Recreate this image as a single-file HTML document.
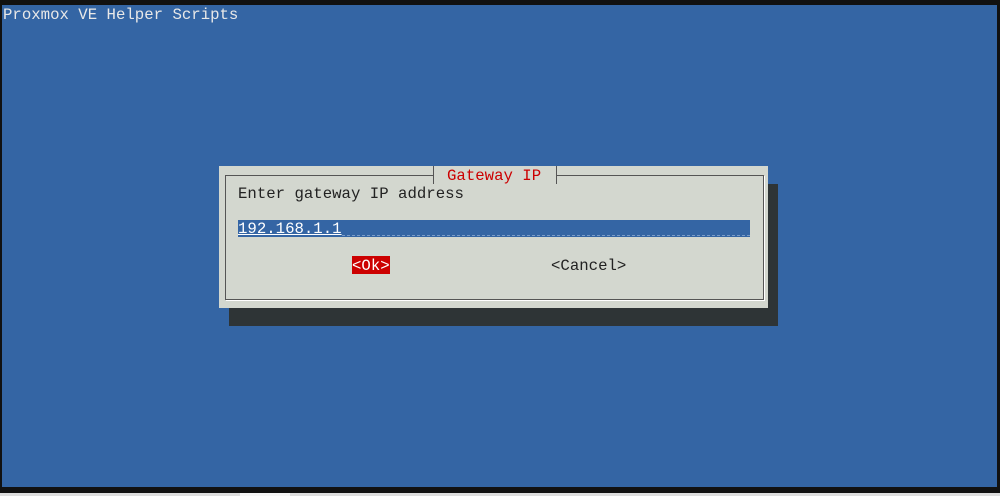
<!DOCTYPE html>
<html><head><style>
*{margin:0;padding:0}
body{width:1000px;height:496px;background:#111;position:relative;overflow:hidden;font-family:"Liberation Mono",monospace;font-size:15.7px}
.t{position:absolute;white-space:pre;line-height:18px}
</style></head><body>
<div style="position:absolute;left:0;top:493px;width:1000px;height:3px;background:#ddd"></div>
<div style="position:absolute;left:240px;top:493px;width:50px;height:3px;background:#f6f6f6"></div>
<div style="position:absolute;left:2px;top:5px;width:995px;height:482px;background:#3465a4"></div>
<div class="t" style="left:3px;top:6px;color:#e8e8e8">Proxmox VE Helper Scripts</div>
<div style="position:absolute;left:229px;top:184px;width:549px;height:142px;background:#2e3436"></div>
<div style="position:absolute;left:219px;top:166px;width:549px;height:142px;background:#d3d7cf"></div>
<div style="position:absolute;left:225px;top:175px;width:537px;height:123px;border:1px solid #555;box-shadow:1px 1px 0 #fff"></div>
<div style="position:absolute;left:433px;top:166px;width:122px;height:18px;background:#d3d7cf;border-left:1px solid #555;border-right:1px solid #555"></div>
<div class="t" style="left:447px;top:167px;color:#cc0000">Gateway IP</div>
<div class="t" style="left:238px;top:185px;color:#222">Enter gateway IP address</div>
<div style="position:absolute;left:238px;top:220px;width:512px;height:17px;background:#3465a4"></div>
<div style="position:absolute;left:342px;top:235px;width:408px;height:0;border-top:1px dashed #7a9cc8"></div>
<div class="t" style="left:238px;top:220px;color:#fff;text-decoration:underline">192.168.1.1</div>
<div style="position:absolute;left:352px;top:256px;width:38px;height:18px;background:#cc0000"></div>
<div class="t" style="left:352px;top:257px;color:#fff">&lt;Ok&gt;</div>
<div class="t" style="left:551px;top:257px;color:#222">&lt;Cancel&gt;</div>
</body></html>
